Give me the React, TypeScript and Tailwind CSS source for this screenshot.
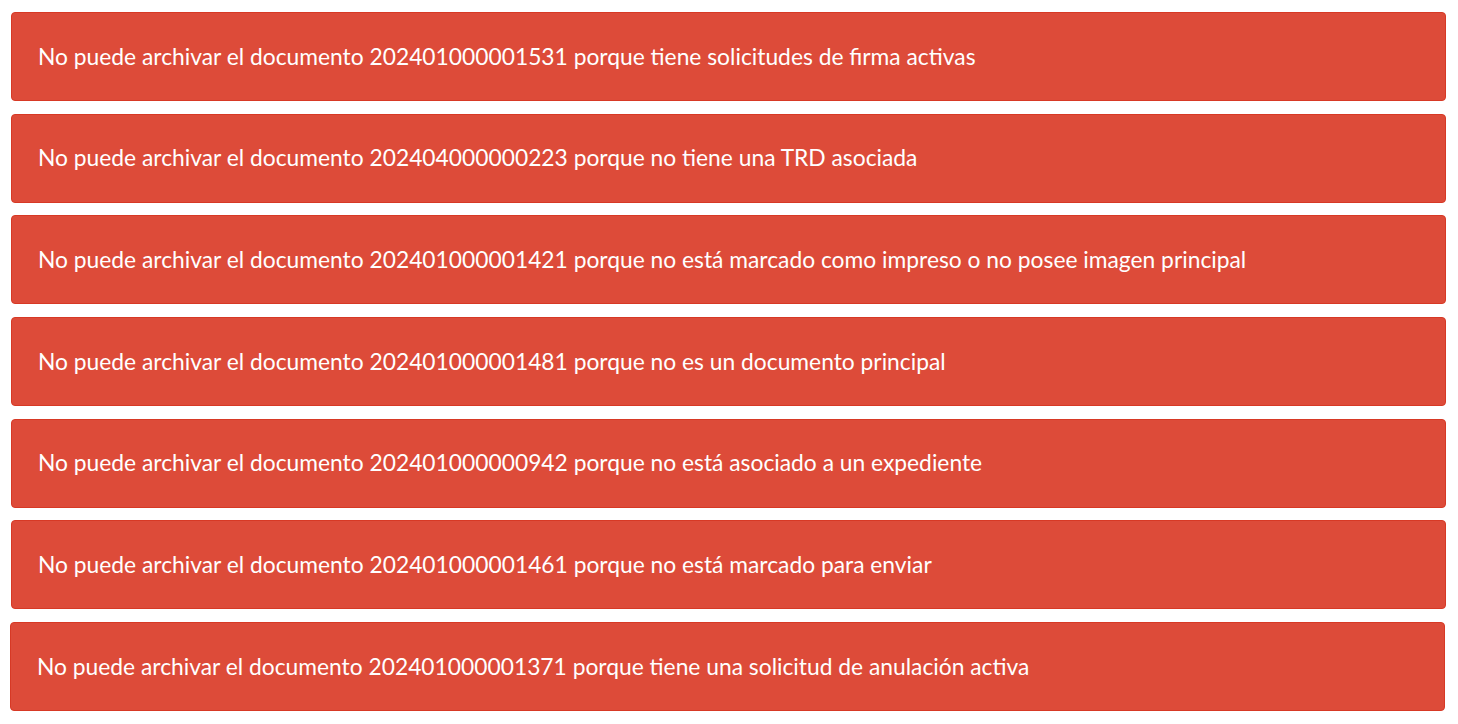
import React from "react";

const msgs = [
  "No puede archivar el documento 202401000001531 porque tiene solicitudes de firma activas",
  "No puede archivar el documento 202404000000223 porque no tiene una TRD asociada",
  "No puede archivar el documento 202401000001421 porque no está marcado como impreso o no posee imagen principal",
  "No puede archivar el documento 202401000001481 porque no es un documento principal",
  "No puede archivar el documento 202401000000942 porque no está asociado a un expediente",
  "No puede archivar el documento 202401000001461 porque no está marcado para enviar",
  "No puede archivar el documento 202401000001371 porque tiene una solicitud de anulación activa",
];

export default function App() {
  return (
    <div className="w-[1458px] h-[724px] bg-white pt-[12px] flex flex-col gap-[12.7px]" style={{ fontFamily: "Lato, 'Noto Sans', sans-serif" }}>
      {msgs.map((m, i) => (
        <div
          key={i}
          className={`h-[89px] ${i === 6 ? "ml-[10px] mr-[13px]" : "ml-[11px] mr-[12px]"} flex items-center pl-[26px] pb-[1px] bg-[#dd4b39] border border-[#d73925] rounded-[4px] text-white text-[22.8px] leading-none`}
        >
          {m}
        </div>
      ))}
    </div>
  );
}
